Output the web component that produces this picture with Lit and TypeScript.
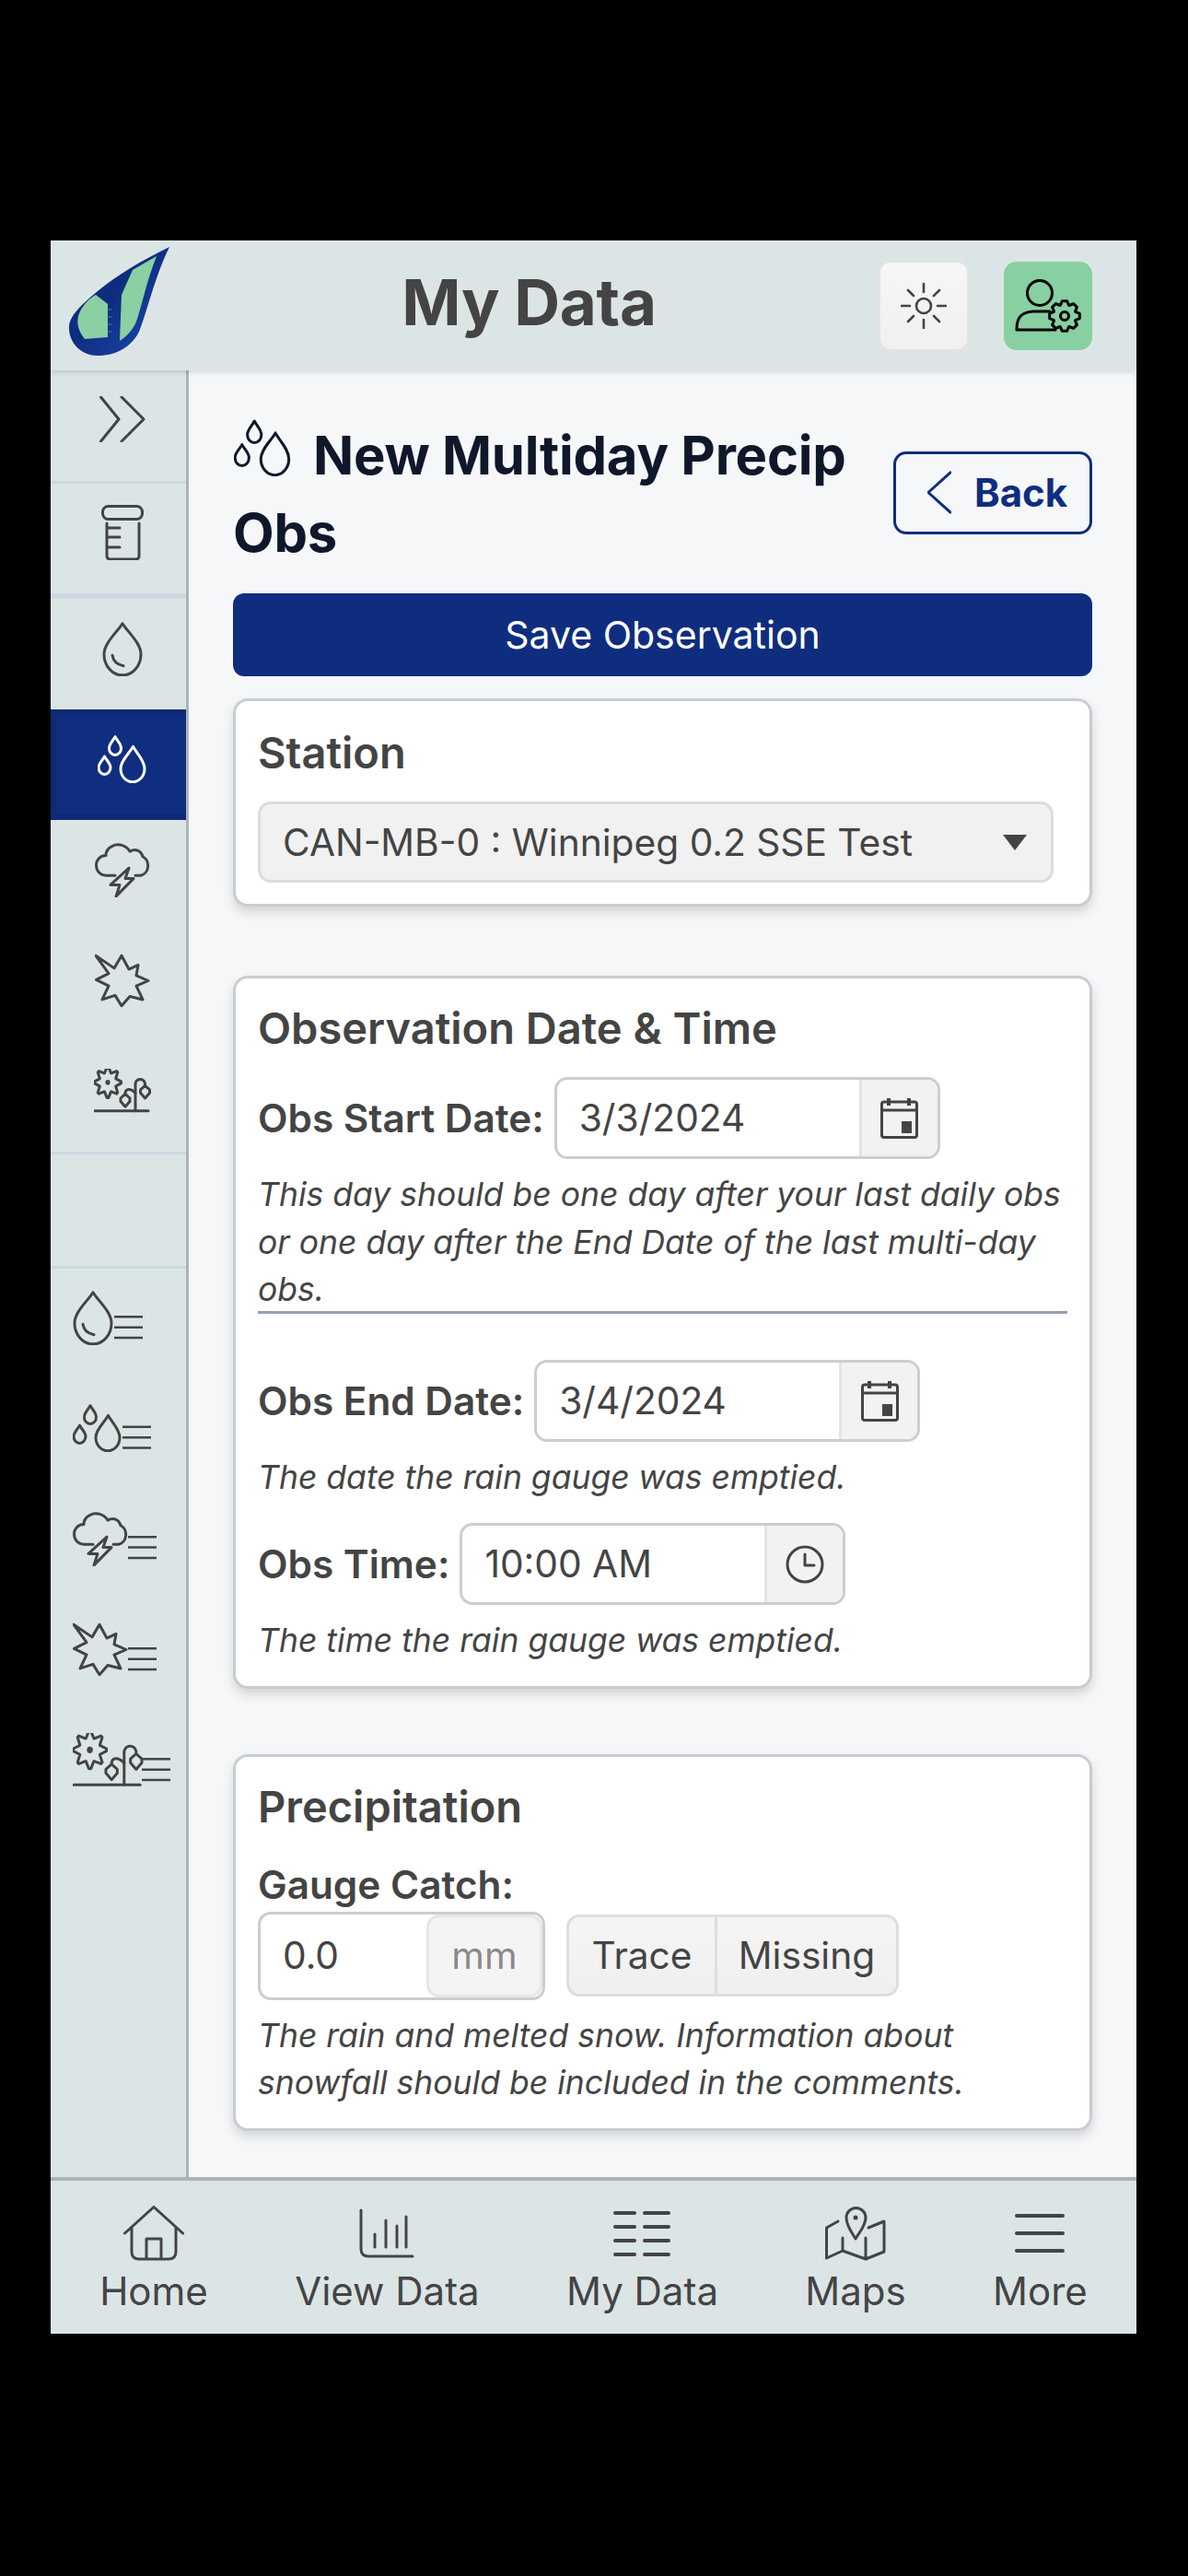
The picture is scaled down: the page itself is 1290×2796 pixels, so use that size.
import { LitElement, html, css, svg } from "lit";
import { customElement } from "lit/decorators.js";

const drop = svg`<path d="M22 1.5C27 9 42 20 42 31A20 20 0 0 1 2 31C2 20 17 9 22 1.5Z"/><path d="M11 32C12 38 17 41 23 42"/>`;
const drops = svg`<path d="M38.5 11C42 17 51 24 51 32A12.7 12.7 0 0 1 25 32C25 24 35 17 38.5 11Z"/><path d="M19 1.5C21 5 25.5 8.5 25.5 12.5A6.5 6.5 0 0 1 12.5 12.5C12.5 8.5 17 5 19 1.5Z"/><path d="M7.5 20.5C9.5 24 14 27 14 31A6.5 6.5 0 0 1 1 31C1 27 5.5 24 7.5 20.5Z"/>`;
const cloud = svg`<path d="M44 31H50A9.5 9.5 0 0 0 52 13C50 7 44 5 38 8C34 2 25 0 19 3C14 5 12 8 12 12C5 12 1.5 17 1.5 21C1.5 27 6 31 12 31H22"/><path d="M37 24L17 40H27L23 51L42 34H33Z"/>`;
const burst = svg`<path d="M1 2L21 14L29 2L37 15L47 11L45 21L58 26L45 31L52 44L38 41L29 50L22 40L8 44L15 31L1.5 25L15 19Z"/>`;

function gear(cx: number, cy: number, ro: number, ri: number, n: number, tip = 0.42) {
  const pts: string[] = [];
  for (let i = 0; i < n; i++) {
    const a = (i / n) * Math.PI * 2;
    const w = Math.PI / n;
    [[ri, -w * 0.95], [ro, -w * tip], [ro, w * tip], [ri, w * 0.95]].forEach(([r, d]) => {
      pts.push(`${(cx + r * Math.cos(a + d)).toFixed(1)},${(cy + r * Math.sin(a + d)).toFixed(1)}`);
    });
  }
  return pts.join(" ");
}

const plants = svg`<polygon points="${gear(15, 13, 14.5, 9.5, 8, 0.15)}"/><circle cx="15" cy="13" r="2.6" class="solid"/><path d="M1 40H59"/><path d="M45 40V14A5.5 5.500 0 0 1 55.500 14V16"/><path d="M45 23C39 18 34 19 34 24"/><path d="M55.500 16L60.500 20V23L55.500 28L50.500 23V20Z"/><path d="M34 24L39 28V31L34 36L29 31V28Z"/>`;

const lines = (x: number, y: number) => svg`<path class="thin" d="M${x} ${y}h31M${x} ${y + 10}h31M${x} ${y + 20}h31"/>`;

const calendar = html`<svg class="ico" width="41" height="45" viewBox="0 0 41 45"><rect x="1.5" y="5" width="38" height="38.5" rx="2.5"/><path d="M1.5 14H39.5"/><path class="heavy" d="M9 1V9M31 1V9"/><rect class="solid" x="23" y="26" width="11" height="13"/></svg>`;
const clock = html`<svg class="ico" width="42" height="42" viewBox="0 0 42 42"><circle cx="21" cy="21" r="19"/><path d="M21 10V22H31"/></svg>`;

@customElement("app-root")
export class AppRoot extends LitElement {
  static styles = css`
    :host { display: block; background: #000; padding: 261px 56px 263px 55px; font-family: Inter, "Liberation Sans", sans-serif; color: #444; }
    svg { display: block; fill: none; stroke: #444; stroke-width: 3; stroke-linecap: round; stroke-linejoin: round; flex: none; }
    svg * { vector-effect: non-scaling-stroke; }
    svg .solid { fill: #444; stroke: none; }
    svg .thin { stroke-width: 2.5; stroke-linecap: butt; }
    svg .heavy { stroke-width: 4; stroke-linecap: butt; }
    .frame { width: 1179px; height: 2272px; display: flex; flex-direction: column; background: #f5f7f9; overflow: hidden; }

    header { height: 141px; flex: none; background: #dce5e6; display: flex; align-items: center; padding: 0 48px 0 20px; box-shadow: 0 2px 6px rgba(0,0,0,.14); position: relative; z-index: 2; }
    .logo { margin-top: -10px; }
    header h2 { flex: 1; margin: 0; text-align: center; font-size: 69px; line-height: 80px; font-weight: 700; color: #444; padding: 0 0 8px 11px; letter-spacing: -0.3px; }
    .head-btn { width: 96px; height: 96px; border-radius: 14px; display: flex; align-items: center; justify-content: center; box-sizing: border-box; }
    .sun { width: 100px; height: 100px; background: linear-gradient(#f6f6f6, #f0f0f0); border: 3px solid #e3e3e3; margin-right: 37px; }
    .user { background: #88cfa2; }
    .user svg { stroke: #000; }

    .body { flex: 1; display: flex; min-height: 0; }
    aside { width: 150px; box-sizing: border-box; flex: none; background: #dce5e6; border-right: 3px solid #aab5b8; display: flex; flex-direction: column; }
    .rowbox { display: flex; align-items: center; justify-content: center; box-sizing: border-box; padding-left: 8px; flex: none; }
    .chev { height: 120px; padding-bottom: 14px; }
    .vial { height: 119px; padding-bottom: 14px; }
    .div { flex: none; background: #cdd8e2; height: 3px; }
    .div.thick { height: 6px; }
    .item { height: 120px; padding-bottom: 12px; }
    .item.active { background: #0f2e80; box-shadow: inset 6px 0 0 #0d2a72, inset 0 6px 0 #0d2a72, inset 0 -6px 0 #0d2a72; }
    .item.active svg { stroke: #fff; }
    .spacer { height: 121px; flex: none; }
    .lined { padding: 0 0 14px 24px; height: 120px; justify-content: flex-start; }

    main { flex: 1; min-width: 0; padding: 50px 48px 0 48px; box-sizing: border-box; overflow: hidden; }
    .titlebar { display: flex; align-items: center; justify-content: space-between; }
    h1 { margin: 0; width: 690px; font-size: 58px; line-height: 84px; font-weight: 700; color: #0f172a; letter-spacing: -0.25px; }
    h1 svg { display: inline-block; vertical-align: -2px; margin: 0 24px 0 1px; stroke: #0f172a; }
    .back { width: 216px; height: 90px; box-sizing: border-box; border: 3px solid #0f2d7f; border-radius: 14px; color: #0f2d7f; font-size: 42px; font-weight: 700; display: flex; align-items: center; justify-content: center; gap: 25px; margin-top: -3px; padding-left: 10px; }
    .back svg { stroke: #0f2d7f; stroke-width: 3; }
    .save { margin-top: 24px; height: 90px; background: #0f2d7f; color: #fff; border-radius: 12px; display: flex; align-items: center; justify-content: center; font-size: 41px; box-sizing: border-box; }

    .card { background: #fff; border: 3px solid #c9ccd0; border-radius: 16px; box-shadow: 0 6px 12px rgba(0,0,0,.14); padding: 24px 24px 23px; margin-top: 24px; }
    .card.far { margin-top: 75px; }
    .card.farther { margin-top: 71px; }
    .card h3 { margin: 0; font-size: 47px; line-height: 60px; font-weight: 600; color: #444; }
    .card h3.first { padding-top: 2px; }
    .select { margin-top: 23px; width: 864px; height: 88px; box-sizing: border-box; background: #f1f1f1; border: 3px solid #dcdcdc; border-radius: 14px; display: flex; align-items: center; justify-content: space-between; padding: 0 24px; font-size: 40.700px; }
    .tri { width: 0; height: 0; border-left: 13px solid transparent; border-right: 13px solid transparent; border-top: 17px solid #444; margin-right: 2px; }
    .field { display: flex; align-items: center; gap: 11px; margin-top: 23px; }
    .field label { font-size: 42.300px; font-weight: 600; white-space: nowrap; }
    .input { width: 419px; height: 89px; box-sizing: border-box; border: 3px solid #cdcdcd; border-radius: 14px; display: flex; overflow: hidden; font-size: 40.700px; }
    .input .val { flex: 1; display: flex; align-items: center; padding-left: 24px; }
    .input .add { width: 82px; flex: none; border-left: 3px solid #e4e4e4; background: #f2f2f2; display: flex; align-items: center; justify-content: center; }
    .help { margin: 13px 0 0; font-size: 35.500px; line-height: 51.500px; font-style: italic; color: #444; }
    .rule { height: 3px; background: #94a0b4; margin: -3px 0 50px; position: relative; }
    .field.flush { margin-top: 0; }
    .gap24 { margin-top: 24px; }
    .glabel { font-size: 42.300px; font-weight: 600; line-height: 54px; margin-top: 28px; }
    .gauge { display: flex; align-items: center; gap: 23px; margin-top: 2px; }
    .numinput { width: 312px; height: 96px; box-sizing: border-box; border: 3px solid #cdcdcd; border-radius: 14px; display: flex; align-items: stretch; font-size: 40.700px; overflow: hidden; }
    .numinput .val { flex: 1; display: flex; align-items: center; padding-left: 24px; }
    .numinput .unit { width: 126px; box-sizing: border-box; background: #f4f4f4; border: 3px solid #e6e6e6; border-radius: 14px; color: #8a8a8a; display: flex; align-items: center; justify-content: center; }
    .btngroup { height: 89px; width: 361px; box-sizing: border-box; background: linear-gradient(#f5f5f5, #efefef); border: 3px solid #dedede; border-radius: 14px; display: flex; font-size: 40.700px; }
    .btngroup span { display: flex; align-items: center; justify-content: center; }
    .btngroup .a { width: 158px; border-right: 3px solid #dedede; }
    .btngroup .b { flex: 1; }

    nav { flex: none; height: 170px; box-sizing: border-box; background: #dce5e6; border-top: 4px solid #aab5b8; display: flex; justify-content: space-around; padding: 27px 6px 0; }
    .tab { display: flex; flex-direction: column; align-items: center; font-size: 42px; line-height: 48px; gap: 9px; }
    .tab .ic { height: 60px; flex: none; display: flex; align-items: center; justify-content: center; }
    .tab svg.w4 { stroke-width: 4; }
  `;

  private sideItem(content: unknown, w: number, h: number, vb: string, active = false) {
    return html`<div class="rowbox item ${active ? "active" : ""}"><svg width=${w} height=${h} viewBox=${vb} preserveAspectRatio="none">${content}</svg></div>`;
  }

  private linedItem(content: unknown, w: number, h: number, vb: string) {
    return html`<div class="rowbox lined"><svg width=${w} height=${h} viewBox=${vb} preserveAspectRatio="none">${content}</svg></div>`;
  }

  render() {
    return html`<div class="frame">
      <header>
        <svg class="logo" width="110" height="118" viewBox="0 0 110 118">
          <defs><linearGradient id="leaf" x1="0" y1="0" x2="1" y2="1"><stop offset="0.45" stop-color="#0f2d7f"/><stop offset="1" stop-color="#1a4cb4"/></linearGradient></defs>
          <path fill="url(#leaf)" stroke="none" d="M109 0C80 14 50 32 31 48C12 64 0 75 0 88C0 105 14 118 31 118C52 118 68 108 76 92C85 70 92 35 109 0Z"/>
          <path fill="#8ad0a3" stroke="none" d="M29 52L42 62V98L17 100C9 90 7 80 12 70C16 62 22 56 29 52Z"/>
          <path fill="#8ad0a3" stroke="none" d="M95 10L69 25L57 52L55 102C64 96 71 88 74 78C80 60 84 38 95 10Z"/>
          <path stroke="#5b7aa8" stroke-width="1" d="M42 68h4M42 76h4M42 84h4M42 92h4"/>
        </svg>
        <h2>My Data</h2>
        <div class="head-btn sun">
          <svg width="50" height="50" viewBox="0 0 50 50" style="stroke-width:2.6"><circle cx="25" cy="25" r="8"/><path d="M25 1V10M25 40V49M1 25H10M40 25H49M8 8L14 14M36 36L42 42M42 8L36 14M14 36L8 42"/></svg>
        </div>
        <div class="head-btn user">
          <svg width="72" height="58" viewBox="0 0 72 58"><circle cx="27" cy="15" r="13.5"/><path d="M2 55C2 45 4 36 20 35H38M2 55H44"/><polygon points="${gear(54, 40, 16.5, 12.5, 8)}"/><circle cx="54" cy="40" r="4.5"/></svg>
        </div>
      </header>
      <div class="body">
        <aside>
          <div class="rowbox chev"><svg width="50" height="50" viewBox="0 0 50 50"><path d="M1.5 1L21 25L1.5 49M24 1L48 25L24 49"/></svg></div>
          <div class="div"></div>
          <div class="rowbox vial"><svg width="46" height="60" viewBox="0 0 46 60"><rect x="1.5" y="1.500" width="43" height="14" rx="6"/><path d="M6 20V55Q6 59 10 59H37Q41 59 41 55V20M6 25H20M6 35H20M6 46H20"/></svg></div>
          <div class="div thick"></div>
          ${this.sideItem(drop, 44, 59, "0 0 44 52")}
          ${this.sideItem(drops, 53, 52, "0 0 53 46", true)}
          ${this.sideItem(cloud, 60, 59, "0 0 60 52")}
          ${this.sideItem(burst, 60, 59, "0 0 60 52")}
          ${this.sideItem(plants, 62, 48, "0 0 62 42")}
          <div class="div"></div>
          <div class="spacer"></div>
          <div class="div"></div>
          ${this.linedItem(svg`${drop}${lines(45, 25)}`, 76, 59, "0 0 76 52")}
          ${this.linedItem(svg`${drops}${lines(54, 22)}`, 85, 52, "0 0 85 46")}
          ${this.linedItem(svg`${cloud}${lines(60, 24)}`, 91, 59, "0 0 91 52")}
          ${this.linedItem(svg`${burst}${lines(60, 25)}`, 91, 59, "0 0 91 52")}
          ${this.linedItem(svg`<g transform="scale(1.24)">${plants}</g>${lines(75, 25)}`, 106, 59, "0 0 106 52")}
        </aside>
        <main>
          <div class="titlebar">
            <h1><svg width="62" height="62" viewBox="0 0 53 46" preserveAspectRatio="none">${drops}</svg>New Multiday Precip Obs</h1>
            <div class="back"><svg width="26" height="47" viewBox="0 0 26 50" preserveAspectRatio="none"><path d="M25 2L1 25L25 48"/></svg>Back</div>
          </div>
          <div class="save">Save Observation</div>

          <section class="card">
            <h3 class="first">Station</h3>
            <div class="select"><span>CAN-MB-0 : Winnipeg 0.2 SSE Test</span><span class="tri"></span></div>
          </section>

          <section class="card far">
            <h3>Observation Date &amp; Time</h3>
            <div class="field"><label>Obs Start Date:</label><div class="input"><div class="val">3/3/2024</div><div class="add">${calendar}</div></div></div>
            <p class="help">This day should be one day after your last daily obs or one day after the End Date of the last multi-day obs.</p>
            <div class="rule"></div>
            <div class="field flush"><label>Obs End Date:</label><div class="input"><div class="val">3/4/2024</div><div class="add">${calendar}</div></div></div>
            <p class="help">The date the rain gauge was emptied.</p>
            <div class="field gap24"><label>Obs Time:</label><div class="input"><div class="val">10:00 AM</div><div class="add">${clock}</div></div></div>
            <p class="help">The time the rain gauge was emptied.</p>
          </section>

          <section class="card farther">
            <h3>Precipitation</h3>
            <div class="glabel">Gauge Catch:</div>
            <div class="gauge">
              <div class="numinput"><div class="val">0.0</div><div class="unit">mm</div></div>
              <div class="btngroup"><span class="a">Trace</span><span class="b">Missing</span></div>
            </div>
            <p class="help">The rain and melted snow. Information about snowfall should be included in the comments.</p>
          </section>
        </main>
      </div>
      <nav>
        <div class="tab"><div class="ic"><svg width="66" height="60" viewBox="0 0 66 60"><path d="M1.500 30L33 1.500L64.500 30M9 23V50Q9 58 17 58H49Q57 58 57 50V23M25 57V36H41V57"/></svg></div>Home</div>
        <div class="tab"><div class="ic"><svg width="60" height="54" viewBox="0 0 60 54"><path d="M2 2V44Q2 52 10 52H58M17 28V42M29 13V42M41 19V42M51 9V42"/></svg></div>View Data</div>
        <div class="tab"><div class="ic"><svg class="w4" width="62" height="50" viewBox="0 0 62 50"><path d="M2 3H23M34 3H60M2 18H23M34 18H60M2 33H23M34 33H60M2 48H23M34 48H60"/></svg></div>My Data</div>
        <div class="tab"><div class="ic"><svg width="66" height="60" viewBox="0 0 66 60"><path d="M14 17L1.500 24V57L19 49L44 58L64 50V17L47 24M19 35V49M44 35V58"/><path d="M33 36C29 29 23 22 23 13A10.500 10.500 0 0 1 44 13C44 22 37 29 33 36Z"/><circle class="solid" cx="33" cy="13" r="2.500"/></svg></div>Maps</div>
        <div class="tab"><div class="ic"><svg class="w4" width="54" height="44" viewBox="0 0 54 44"><path d="M2 3H52M2 22H52M2 41H52"/></svg></div>More</div>
      </nav>
    </div>`;
  }
}
